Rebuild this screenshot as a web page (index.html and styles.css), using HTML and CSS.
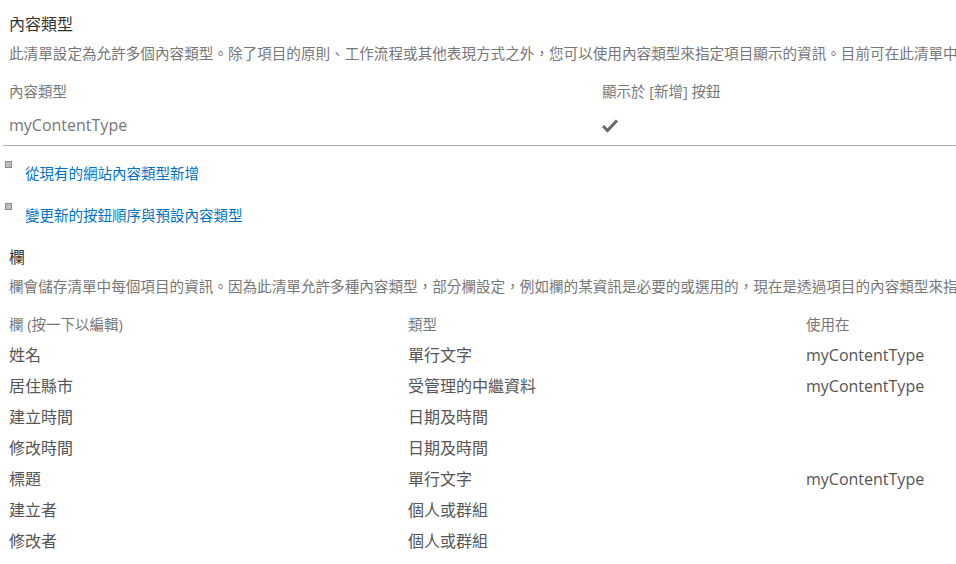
FILE: index.html
```html
<!DOCTYPE html>
<html lang="zh-Hant">
<head>
    <meta charset="UTF-8">
    <meta name="viewport" content="width=device-width, initial-scale=1.0">
    <title>清單設定</title>
    <link rel="stylesheet" href="styles.css">
</head>
<body>
    <div class="settings">
        <h2 class="section-title">內容類型</h2>
        <p class="section-desc">此清單設定為允許多個內容類型。除了項目的原則、工作流程或其他表現方式之外，您可以使用內容類型來指定項目顯示的資訊。目前可在此清單中</p>

        <div class="ct-table">
            <div class="ct-head">內容類型</div>
            <div class="ct-head">顯示於 [新增] 按鈕</div>
            <div class="ct-cell ct-name">myContentType</div>
            <div class="ct-cell">
                <svg class="check" width="18" height="15" viewBox="0 0 18 15">
                    <path d="M2 8 L6.5 12.5 L16 2.5" fill="none" stroke="#6a6a6a" stroke-width="3"/>
                </svg>
            </div>
        </div>

        <ul class="link-list">
            <li><span class="bullet"></span><a href="#">從現有的網站內容類型新增</a></li>
            <li><span class="bullet"></span><a href="#">變更新的按鈕順序與預設內容類型</a></li>
        </ul>

        <h2 class="section-title">欄</h2>
        <p class="section-desc">欄會儲存清單中每個項目的資訊。因為此清單允許多種內容類型，部分欄設定，例如欄的某資訊是必要的或選用的，現在是透過項目的內容類型來指</p>

        <div class="col-table">
            <div class="col-head">欄 (按一下以編輯)</div>
            <div class="col-head">類型</div>
            <div class="col-head">使用在</div>

            <div>姓名</div><div>單行文字</div><div>myContentType</div>
            <div>居住縣市</div><div>受管理的中繼資料</div><div>myContentType</div>
            <div>建立時間</div><div>日期及時間</div><div></div>
            <div>修改時間</div><div>日期及時間</div><div></div>
            <div>標題</div><div>單行文字</div><div>myContentType</div>
            <div>建立者</div><div>個人或群組</div><div></div>
            <div>修改者</div><div>個人或群組</div><div></div>
        </div>
    </div>
</body>
</html>
```

FILE: styles.css
```css
* { box-sizing: border-box; margin: 0; padding: 0; }
html, body { height: 100%; }
body {
    background: #fff;
    color: #444;
    font-family: 'Open Sans', 'Noto Sans CJK TC', sans-serif;
    overflow: hidden;
}
.settings {
    padding-top: 14px;
}
.section-title {
    padding-left: 9px;
    font-size: 16px;
    line-height: 20px;
    font-weight: normal;
    color: #333;
}
.section-desc {
    padding-left: 9px;
    margin-top: 9px;
    font-size: 14.6px;
    line-height: 20px;
    color: #777;
    white-space: nowrap;
    overflow: hidden;
}

/* content types table */
.ct-table {
    display: grid;
    grid-template-columns: 593px 1fr;
    margin: 19px 0 0 3px;
    border-bottom: 1px solid #ababab;
}
.ct-head {
    padding-left: 6px;
    font-size: 14.5px;
    line-height: 20px;
    color: #777;
}
.ct-cell {
    padding: 11px 0 8px 6px;
    height: 43px;
    line-height: 24px;
    font-size: 16px;
    color: #777;
}
.check { vertical-align: middle; margin-top: -2px; margin-left: -1px; }

/* links */
.link-list {
    list-style: none;
    margin-top: 15px;
}
.link-list li {
    display: flex;
    align-items: flex-start;
    height: 21px;
    margin-bottom: 21px;
}
.link-list li:last-child { margin-bottom: 23px; }
.bullet {
    width: 7px;
    height: 7px;
    margin: 0 13px 0 5px;
    border: 1px solid #8c8c8c;
    background: #bdbdbd;
}
.link-list a {
    padding-top: 5px;
    font-size: 14.5px;
    line-height: 16px;
    color: #0072c6;
    text-decoration: none;
}

/* columns table */
.col-table {
    display: grid;
    grid-template-columns: 399px 398px 1fr;
    margin-top: 13px;
    padding-left: 9px;
    font-size: 16px;
    line-height: 31px;
    color: #555;
}
.col-head {
    font-size: 14.5px;
    color: #777;
}
```
